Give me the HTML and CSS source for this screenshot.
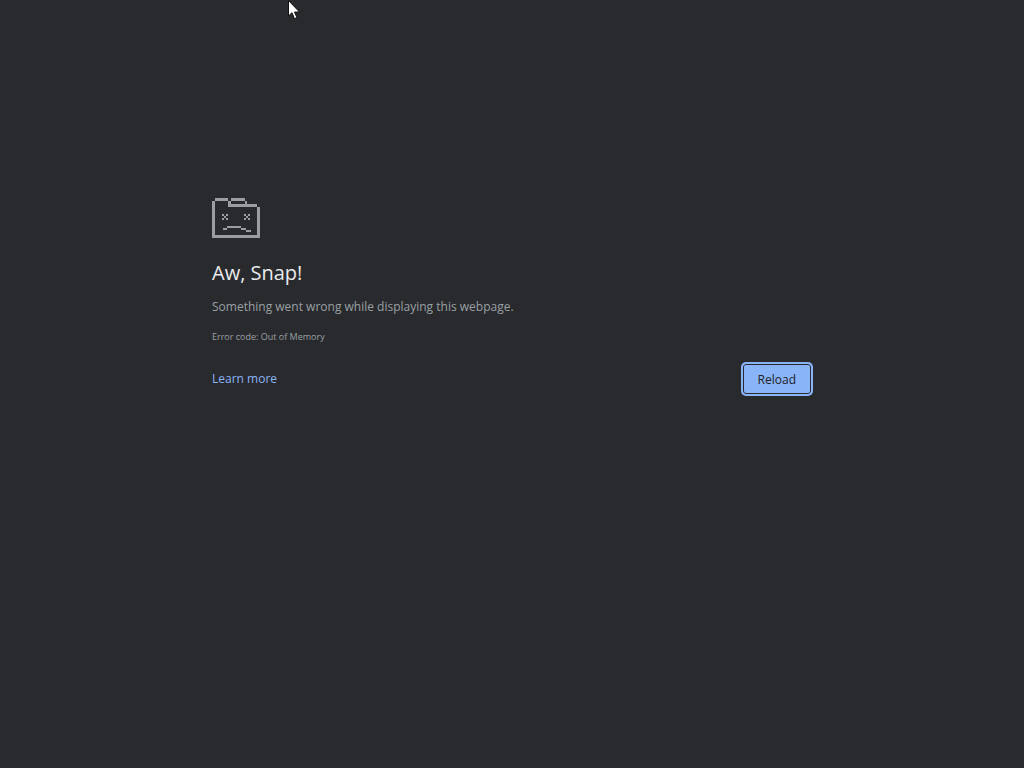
FILE: index.html
```html
<!DOCTYPE html>
<html lang="en">
<head>
    <meta charset="utf-8">
    <meta name="viewport" content="width=device-width, initial-scale=1">
    <title>Aw, Snap!</title>
    <link rel="stylesheet" href="styles.css">
</head>
<body>

    <main class="container">
        <svg class="icon" width="48" height="40" viewBox="0 0 48 40" shape-rendering="crispEdges" aria-hidden="true">
            <!-- Folder outline -->
            <path d="M3 0h13v3h3v3h26v3H16V3H3zM19 0h14v3H19zM33 3h2v3h-2zM0 3h3v34h42V9h3v31H0z"/>
            <!-- Eyes -->
            <path d="M10 16h2v2h-2zM14 16h2v2h-2zM12 18h2v2h-2zM10 20h2v2h-2zM14 20h2v2h-2z"/>
            <path d="M32 16h2v2h-2zM36 16h2v2h-2zM34 18h2v2h-2zM32 20h2v2h-2zM36 20h2v2h-2z"/>
            <!-- Mouth -->
            <path d="M11 30h4v2h-4zM15 28h14v2H15zM29 30h5v2h-5zM34 32h5v2h-5z"/>
        </svg>

        <h1>Aw, Snap!</h1>
        <p class="message">Something went wrong while displaying this webpage.</p>
        <p class="error-code">Error code: Out of Memory</p>

        <div class="actions">
            <a href="#">Learn more</a>
            <button type="button" onclick="location.reload()">Reload</button>
        </div>
    </main>

    <svg class="cursor" width="12" height="20" viewBox="0 0 12 20" aria-hidden="true">
        <path d="M.5 .5v15.500l3.500-3.300 2.500 6 2.500-1-2.500-5.700h5z"/>
    </svg>

</body>
</html>
```

FILE: styles.css
```css
        * {
            box-sizing: border-box;
        }
        body {
            margin: 0;
            min-height: 100vh;
            background-color: #292a2d;
            color: #9aa0a6;
            font-family: "Segoe UI", "Open Sans", sans-serif;
            font-size: 12px;
            line-height: 20px;
        }
        .container {
            width: 90%;
            max-width: 600px;
            margin: 0 auto;
            padding-top: 198px;
        }
        .icon {
            display: block;
            fill: #9c9da0;
        }
        h1 {
            margin: 20px 0 9px;
            color: #e8eaed;
            font-size: 20px;
            font-weight: 400;
            line-height: 30px;
        }
        p {
            margin: 0;
        }
        .error-code {
            margin-top: 10px;
            font-size: 9px;
        }
        .actions {
            display: flex;
            justify-content: space-between;
            align-items: center;
            margin-top: 16px;
        }
        a {
            color: #8ab4f8;
            text-decoration: none;
        }
        button {
            height: 32px;
            padding: 0 15px;
            border: 1px solid #8ab4f8;
            border-radius: 4px;
            background-color: #8ab4f8;
            box-shadow: 0 0 0 1px #8ab4f8, inset 0 0 0 1px #292a2d;
            color: #202124;
            font-family: inherit;
            font-size: 12px;
            cursor: pointer;
        }
        /* Mouse pointer over the page */
        .cursor {
            position: absolute;
            top: 0;
            left: 288px;
            fill: #fff;
            stroke: #111;
        }
```
